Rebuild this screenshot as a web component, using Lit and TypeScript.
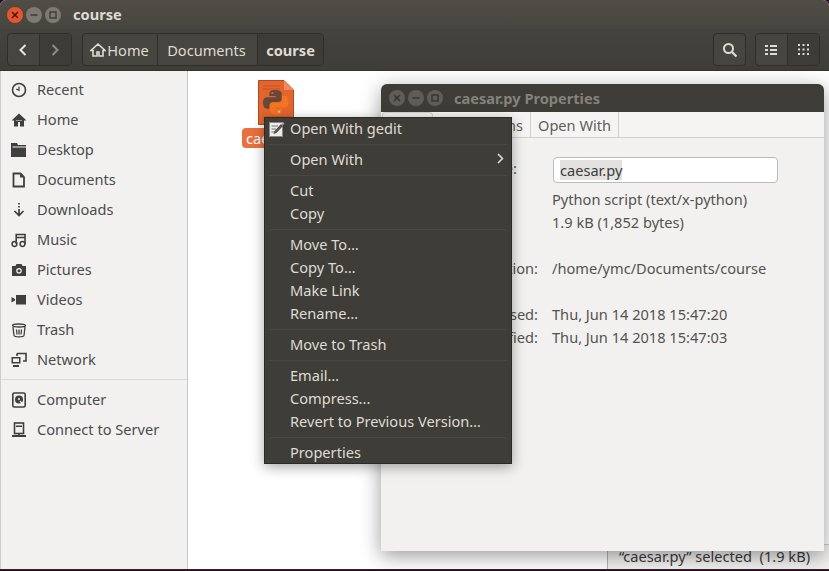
import { LitElement, css, html, svg } from 'lit';
import { customElement } from 'lit/decorators.js';

const ICONS: Record<string, unknown> = {
  recent: svg`<circle cx="8" cy="8" r="6.5" fill="none" stroke="currentColor" stroke-width="1.6"/><path d="M8 4.5V8.4L5.2 7" fill="none" stroke="currentColor" stroke-width="1.2"/>`,
  home: svg`<path d="M8 1.5L0.5 8.5H3V14.5H7V10H9V14.5H13V8.5H15.5Z" fill="currentColor"/><path d="M5 8.5H11V9H5Z" fill="#f2f1f0"/>`,
  desktop: svg`<path d="M0 1H6L7 3H15V15H0Z" fill="currentColor"/><path d="M1.5 4.5H15V5.5H1.5Z" fill="#f2f1f0"/>`,
  documents: svg`<path d="M2.5 1.5H9.5L13 5V14.5H2.5Z" fill="none" stroke="currentColor" stroke-width="1.8"/><path d="M9 1.5V5.5H13" fill="currentColor"/>`,
  downloads: svg`<path d="M8 1V2.5M8 4V5.5M8 7V12.5M3.5 9L8 13.5L12.5 9" fill="none" stroke="currentColor" stroke-width="1.7"/>`,
  music: svg`<circle cx="3.5" cy="12" r="2.4" fill="none" stroke="currentColor" stroke-width="1.5"/><circle cx="11.5" cy="12" r="2.4" fill="none" stroke="currentColor" stroke-width="1.5"/><path d="M5.2 12V2.5H14V12M5.2 5.5H14" fill="none" stroke="currentColor" stroke-width="1.6"/>`,
  pictures: svg`<path d="M1 4H4.5L5.5 2H10.5L11.5 4H15V14H1Z" fill="currentColor"/><circle cx="8" cy="8.8" r="2.8" fill="#f2f1f0"/><circle cx="8" cy="8.8" r="1.5" fill="currentColor"/>`,
  videos: svg`<path d="M5 3H15V12.5H5Z M0.5 5L4 7V8.5L0.5 10.5Z" fill="currentColor"/>`,
  trash: svg`<path d="M1.5 3.5C1.5 1.5 14.5 1.5 14.5 3.5C14.5 5.5 1.5 5.5 1.5 3.5Z" fill="none" stroke="currentColor" stroke-width="1.4"/><path d="M2 5L3 13.5C3.3 15.3 12.7 15.3 13 13.5L14 5M5.5 7.5L6 12.5M8 7.5V12.5M10.5 7.5L10 12.5" fill="none" stroke="currentColor" stroke-width="1.3"/>`,
  network: svg`<path d="M6 1.5H15V9H12M6 1.5V4" fill="none" stroke="currentColor" stroke-width="1.6"/><path d="M0.5 5H9.5V11.5H0.5Z" fill="currentColor"/><path d="M2 6.5H8V10H2Z" fill="#f2f1f0"/><path d="M2 13H8V15H2Z" fill="currentColor"/>`,
  computer: svg`<rect x="1.8" y="1" width="12.4" height="14" rx="1.5" fill="none" stroke="currentColor" stroke-width="1.6"/><circle cx="8" cy="7.5" r="4" fill="currentColor"/><circle cx="8" cy="7" r="1" fill="#f2f1f0"/><path d="M9 9L12 12.5" stroke="#f2f1f0" stroke-width="1.2"/>`,
  server: svg`<rect x="3.5" y="1" width="9" height="10.5" fill="none" stroke="currentColor" stroke-width="1.6"/><path d="M5 3.5H11V5H5Z M7.2 11.5H8.8V13H15V15H1V13H7.2Z" fill="currentColor"/>`,
};

const PLACES = [
  ['recent', 'Recent'],
  ['home', 'Home'],
  ['desktop', 'Desktop'],
  ['documents', 'Documents'],
  ['downloads', 'Downloads'],
  ['music', 'Music'],
  ['pictures', 'Pictures'],
  ['videos', 'Videos'],
  ['trash', 'Trash'],
  ['network', 'Network'],
];

const MENU = [
  ['Open With gedit'],
  ['Open With'],
  ['Cut', 'Copy'],
  ['Move To…', 'Copy To…', 'Make Link', 'Rename…'],
  ['Move to Trash'],
  ['Email…', 'Compress...', 'Revert to Previous Version…'],
  ['Properties'],
];

@customElement('app-root')
export class AppRoot extends LitElement {
  static styles = css`
    :host {
      display: block;
      position: relative;
      width: 829px;
      height: 571px;
      overflow: hidden;
      background: #300a24;
      font-family: 'Noto Sans', 'Open Sans', sans-serif;
      font-size: 14.6px;
      color: #4c4c4c;
    }
    .window {
      height: 570px;
      display: flex;
      flex-direction: column;
      background: #fff;
      border-radius: 6px 6px 0 0;
      border-bottom: 1px solid #2a2825;
      box-sizing: border-box;
      overflow: hidden;
    }
    .titlebar {
      height: 29px;
      flex: none;
      display: flex;
      align-items: center;
      padding-left: 7px;
      background: linear-gradient(#504d46, #47453f);
      color: #dfdbd2;
      font-weight: 700;
    }
    .titlebar > span {
      margin-bottom: 2px;
    }
    .wm {
      display: flex;
      gap: 3px;
      margin-right: 12px;
    }
    .wm span {
      width: 16px;
      height: 16px;
      border-radius: 50%;
      display: flex;
      align-items: center;
      justify-content: center;
      background: #7d7a72;
      color: #3c3b37;
    }
    .wm span.close {
      background: #e9552b;
      color: #3c1b10;
    }
    .wm svg {
      width: 8px;
      height: 8px;
    }
    .toolbar {
      height: 42px;
      flex: none;
      box-sizing: border-box;
      display: flex;
      align-items: flex-start;
      padding: 4px 9px 0 7px;
      background: linear-gradient(#45433d, #3f3d38);
      border-bottom: 1px solid #35332e;
      color: #dfdbd2;
    }
    .group {
      display: flex;
      height: 33px;
      box-sizing: border-box;
      border: 1px solid #302e2a;
      border-radius: 4px;
      background: #47453f;
      overflow: hidden;
    }
    .group > * {
      display: flex;
      align-items: center;
      justify-content: center;
      box-sizing: border-box;
      border-right: 1px solid #302e2a;
    }
    .group > *:last-child {
      border-right: 0;
    }
    .group .on {
      background: #3e3c37;
    }
    .nav {
      width: 65px;
      margin-right: 10px;
    }
    .nav span {
      width: 32px;
    }
    .path {
      width: 242px;
    }
    .path span:nth-child(1) {
      width: 75px;
      gap: 1px;
      padding-right: 1px;
    }
    .path span:nth-child(2) {
      width: 100px;
      padding-right: 2px;
    }
    .path span:nth-child(3) {
      width: 65px;
    }
    .path .on {
      font-weight: 700;
    }
    .spacer {
      flex: 1;
    }
    .search {
      width: 33px;
      margin-right: 9px;
    }
    .search span {
      width: 100%;
    }
    .views {
      width: 65px;
    }
    .views span {
      width: 32px;
    }
    .body {
      flex: 1;
      display: flex;
      min-height: 0;
    }
    .sidebar {
      width: 188px;
      flex: none;
      box-sizing: border-box;
      padding: 3px 0 0 1px;
      background: #f2f1f0;
      border-left: 1px solid #cfcdc9;
      border-right: 1px solid #c9c7c3;
    }
    .place {
      height: 30px;
      display: flex;
      align-items: center;
      gap: 10px;
      padding-left: 9px;
    }
    .place svg {
      width: 16px;
      height: 16px;
      flex: none;
      margin-top: 1px;
      color: #3f3f3f;
    }
    .divider {
      height: 1px;
      margin: 5px 0 4px -1px;
      background: #dbd9d6;
    }
    .files {
      flex: 1;
      position: relative;
    }
    .file {
      position: absolute;
      left: 54px;
      top: 9px;
      width: 68px;
      display: flex;
      flex-direction: column;
      align-items: center;
    }
    .file svg {
      width: 36px;
      height: 45px;
    }
    .file label {
      margin-top: 3px;
      width: 68px;
      box-sizing: border-box;
      padding-left: 4px;
      border-radius: 4px;
      background: #e9703f;
      color: #fff;
      line-height: 20px;
      white-space: nowrap;
    }
    .status {
      position: absolute;
      right: 0;
      bottom: 0;
      width: 222px;
      height: 25px;
      box-sizing: border-box;
      padding-left: 11px;
      background: #f2f1f0;
      border-left: 1px solid #b6b4b0;
      border-top: 1px solid #cfcdc9;
      line-height: 22px;
      white-space: pre;
      color: #3c3c3c;
    }
    .props {
      position: absolute;
      left: 381px;
      top: 84px;
      width: 443px;
      height: 467px;
      display: flex;
      flex-direction: column;
      background: #f2f1f0;
      border-radius: 6px 6px 0 0;
      box-shadow: 0 5px 20px rgba(0, 0, 0, 0.4);
      color: #55534f;
    }
    .props header {
      height: 28px;
      flex: none;
      display: flex;
      align-items: center;
      padding-left: 8px;
      background: #3e3c37;
      border-radius: 6px 6px 0 0;
      color: #85827b;
      font-weight: 700;
    }
    .props .wm {
      margin-right: 11px;
    }
    .props .wm span {
      background: #5f5d57;
      color: #37352f;
    }
    .tabs {
      height: 26px;
      flex: none;
      box-sizing: border-box;
      display: flex;
      border-bottom: 1px solid #d3d1cd;
      background: #f5f4f3;
      color: #605e5a;
    }
    .tabs span {
      display: flex;
      align-items: center;
      box-sizing: border-box;
      padding: 1px 0 0 7px;
      border-right: 1px solid #d3d1cd;
    }
    .tabs .basic {
      width: 51px;
      height: 26px;
      background: #f2f1f0;
      border: 1px solid #d3d1cd;
      border-bottom: 0;
      border-radius: 4px 4px 0 0;
      margin-left: 1px;
    }
    .tabs .perm {
      width: 98px;
    }
    .tabs .open {
      width: 88px;
    }
    .form {
      display: grid;
      grid-template-columns: 171px 1fr;
      padding-top: 19px;
      line-height: 23px;
    }
    .form .k {
      text-align: right;
      padding-right: 14px;
    }
    .form .k.name {
      padding-right: 35px;
    }
    .gap {
      margin-top: 23px;
    }
    .entry {
      width: 225px;
      height: 26px;
      box-sizing: border-box;
      margin: 0 0 5px 1px;
      padding: 0 6px;
      border: 1px solid #bdbbb7;
      border-radius: 4px;
      background: #fff;
      line-height: 24px;
      color: #3c3c3c;
    }
    .entry b {
      font-weight: 400;
      background: #e3e2e0;
    }
    .menu {
      position: absolute;
      left: 264px;
      top: 117px;
      width: 248px;
      height: 347px;
      box-sizing: border-box;
      border: 1px solid #2c2a26;
      background: #3f3d38;
      color: #dfdbd2;
      box-shadow: 0 3px 12px rgba(0, 0, 0, 0.35);
    }
    .menu section {
      padding: 3px 0 4px;
      border-bottom: 1px solid #4a4843;
      margin: 0 5px;
    }
    .menu section:first-of-type {
      margin-top: -1px;
      padding-top: 0;
    }
    .menu section:last-child {
      border-bottom: 0;
    }
    .row {
      height: 23px;
      box-sizing: border-box;
      display: flex;
      align-items: center;
      justify-content: space-between;
      padding: 0 2px 2px 20px;
    }
    .menu svg.chev {
      width: 8px;
      height: 11px;
    }
    .gedit {
      position: absolute;
      left: 4px;
      top: 3px;
      width: 16px;
      height: 16px;
    }
  `;

  private _wm() {
    return html`<div class="wm">
      <span class="close"><svg viewBox="0 0 8 8"><path d="M1 1L7 7M7 1L1 7" stroke="currentColor" stroke-width="1.5"/></svg></span>
      <span><svg viewBox="0 0 8 8"><path d="M0.5 4H7.5" stroke="currentColor" stroke-width="1.5"/></svg></span>
      <span><svg viewBox="0 0 8 8"><rect x="1" y="1" width="6" height="6" fill="none" stroke="currentColor" stroke-width="1.4"/></svg></span>
    </div>`;
  }

  private _place(icon: string, label: string) {
    return html`<div class="place">
      <svg viewBox="0 0 16 16">${ICONS[icon]}</svg><span>${label}</span>
    </div>`;
  }

  private _python() {
    return html`<svg viewBox="0 0 36 45">
      <path d="M0.5 0.5H26L35.5 10V44.5H0.5Z" fill="#e2652f" stroke="#b5481c"/>
      <path d="M26 0.5V10H35.5Z" fill="#f08a5c"/>
      <path d="M5 6H22M5 9H22M5 37H31M5 40H31" stroke="#c9551f"/>
      <g transform="translate(5 10) scale(0.85) translate(-3 -8)">
        <path d="M17.5 8C12 8 10.5 9.5 10.5 12.5V15H18V16.5H8C5 16.5 3 18.5 3 23C3 27.5 5 30 8 30H10.5V26C10.5 23.5 12.5 22 15 22H21C23 22 25 20.5 25 18.5V12.5C25 10 22.5 8 17.5 8Z" fill="#66483a"/>
        <path d="M18.5 37C24 37 25.5 35.5 25.5 32.5V30H18V28.5H28C31 28.5 33 26.5 33 22C33 17.5 31 15 28 15H25.5V19C25.5 21.5 23.5 23 21 23H15C13 23 11 24.5 11 26.5V32.5C11 35 13.5 37 18.5 37Z" fill="#f47421"/>
        <circle cx="14" cy="11.5" r="1.2" fill="#e2652f"/>
        <circle cx="22" cy="33.5" r="1.2" fill="#fbd3b5"/>
      </g>
    </svg>`;
  }

  render() {
    return html`
      <div class="window">
        <div class="titlebar">${this._wm()}<span>course</span></div>
        <div class="toolbar">
          <div class="group nav">
            <span><svg width="10" height="14" viewBox="0 0 10 14"><path d="M7.5 2L2.5 7L7.5 12" fill="none" stroke="#e8e5dd" stroke-width="2"/></svg></span>
            <span class="on"><svg width="10" height="14" viewBox="0 0 10 14"><path d="M2.5 2L7.5 7L2.5 12" fill="none" stroke="#8f8c84" stroke-width="2"/></svg></span>
          </div>
          <div class="group path">
            <span><svg width="16" height="16" viewBox="0 0 16 16"><path d="M8 2L1 8.5H3V14H7V10H9V14H13V8.5H15Z" fill="none" stroke="#dfdbd2" stroke-width="1.6"/></svg>Home</span>
            <span>Documents</span>
            <span class="on">course</span>
          </div>
          <div class="spacer"></div>
          <div class="group search">
            <span><svg width="16" height="16" viewBox="0 0 16 16"><circle cx="6.5" cy="6.5" r="4.5" fill="none" stroke="#dfdbd2" stroke-width="2"/><path d="M10 10L14.5 14.5" stroke="#dfdbd2" stroke-width="2.2"/></svg></span>
          </div>
          <div class="group views">
            <span><svg width="12" height="12" viewBox="0 0 12 12"><path d="M0 1H3V3H0ZM5 1H12V3H5ZM0 5H3V7H0ZM5 5H12V7H5ZM0 9H3V11H0ZM5 9H12V11H5Z" fill="#dfdbd2"/></svg></span>
            <span class="on"><svg width="11" height="11" viewBox="0 0 11 11"><path d="M0 0H2V2H0ZM4.5 0H6.5V2H4.5ZM9 0H11V2H9ZM0 4.5H2V6.5H0ZM4.5 4.5H6.5V6.5H4.5ZM9 4.5H11V6.5H9ZM0 9H2V11H0ZM4.5 9H6.5V11H4.5ZM9 9H11V11H9Z" fill="#dfdbd2"/></svg></span>
          </div>
        </div>
        <div class="body">
          <nav class="sidebar">
            ${PLACES.map(([i, l]) => this._place(i, l))}
            <div class="divider"></div>
            ${this._place('computer', 'Computer')}
            ${this._place('server', 'Connect to Server')}
          </nav>
          <main class="files">
            <div class="file">${this._python()}<label>caesar.py</label></div>
            <div class="status">“caesar.py” selected  (1.9 kB)</div>
          </main>
        </div>
      </div>

      <div class="props">
        <header>${this._wm()}<span>caesar.py Properties</span></header>
        <div class="tabs">
          <span class="basic">Basic</span>
          <span class="perm">Permissions</span>
          <span class="open">Open With</span>
        </div>
        <div class="form">
          <div class="k name">Name:</div><div class="entry"><b>caesar.py</b></div>
          <div class="k"></div><div>Python script (text/x-python)</div>
          <div class="k"></div><div>1.9 kB (1,852 bytes)</div>
          <div class="k gap">Location:</div><div class="gap">/home/ymc/Documents/course</div>
          <div class="k gap">Accessed:</div><div class="gap">Thu, Jun 14 2018 15:47:20</div>
          <div class="k">Modified:</div><div>Thu, Jun 14 2018 15:47:03</div>
        </div>
      </div>

      <div class="menu">
        <svg class="gedit" viewBox="0 0 16 16">
          <rect x="0.5" y="1.5" width="13" height="14" fill="#ecebe8" stroke="#8a8883"/>
          <path d="M2.5 5H9M2.5 8H7M2.5 11H6" stroke="#77756f"/>
          <path d="M4.5 13L5.5 10L12 3L14 5L7.5 12Z" fill="#55534f"/>
          <path d="M12.5 2.5L14 1L15.5 2.5L14 4Z" fill="#d48ac0"/>
        </svg>
        ${MENU.map(
          (items) => html`<section>
            ${items.map(
              (t) => html`<div class="row">
                <span>${t}</span>
                ${t === 'Open With'
                  ? html`<svg class="chev" viewBox="0 0 8 11"><path d="M2 1L6.5 5.5L2 10" fill="none" stroke="#dfdbd2" stroke-width="1.6"/></svg>`
                  : ''}
              </div>`,
            )}
          </section>`,
        )}
      </div>
    `;
  }
}
